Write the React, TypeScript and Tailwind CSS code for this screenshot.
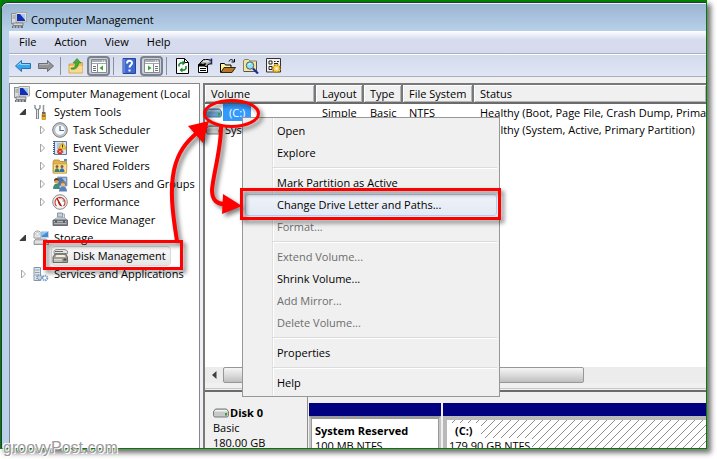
import type { ReactNode } from 'react';
import clsx from 'clsx';

/* ---------- icons ---------- */

interface IconProps {
  children: ReactNode;
}

function Icon({ children }: IconProps) {
  return (
    <svg width="16" height="16" viewBox="0 0 16 16" className="shrink-0" aria-hidden="true">
      {children}
    </svg>
  );
}

const ComputerIcon = () => (
  <Icon>
    <rect x="0.5" y="1.5" width="5" height="10" fill="#d8dade" stroke="#8b8f96" />
    <path d="M1.5 4h3M1.5 6h3" stroke="#8b8f96" />
    <path d="M5 0.5h10.5v9.5H5z" fill="#e6e3da" stroke="#a9a9a4" />
    <path d="M6 2h8v7H6z" fill="#1230b4" />
    <path d="M9 2h5v6z" fill="#a9c8f4" />
    <path d="M2 11h10v2.500H2z" fill="#d5d7da" stroke="#6b6f74" strokeWidth="0.800" />
    <path d="M1 14h11v2H1z" fill="#6b6f74" />
    <path d="M2 14.500h2v1H2zM5 14.500h2v1H5zM8 14.500h2v1H8z" fill="#dfe2e6" />
  </Icon>
);

const ToolsIcon = () => (
  <Icon>
    <path d="M2 1v3l2 2h1l2-2V1" fill="none" stroke="#7f858b" strokeWidth="1.300" />
    <path d="M4.500 6v9" stroke="#7f858b" strokeWidth="3" />
    <path d="M4.500 6v8.500" stroke="#e4e7ea" strokeWidth="1" />
    <path d="M10.500 1v7" stroke="#8f969c" strokeWidth="1.500" />
    <path d="M9 8h3.500v2H9z" fill="#5d6368" />
    <path d="M9 10h3.500v5.500H9z" fill="#f0b21c" stroke="#b57f0e" strokeWidth="0.600" />
    <path d="M9 12h3.500" stroke="#4a4a4a" />
  </Icon>
);

const ClockIcon = () => (
  <Icon>
    <circle cx="8" cy="8" r="7.300" fill="#c3c6c9" stroke="#7b7f83" />
    <circle cx="8" cy="8" r="5.300" fill="#f7fbff" stroke="#a7adb3" strokeWidth="0.700" />
    <path d="M8 4v4.500H12" fill="none" stroke="#4f6f93" strokeWidth="1.200" />
  </Icon>
);

const EventIcon = () => (
  <Icon>
    <path d="M2.500 1.500h12v13h-12z" fill="#d9e6f6" stroke="#68799a" />
    <path d="M2 1v14" stroke="#445d8b" strokeWidth="2" strokeDasharray="1 1" />
    <path d="M5 4h4M5 6h3M5 8h3M5 12h7" stroke="#8aa2c4" />
    <path d="M10.500 2.500l4 6.500h-8z" fill="#ffd52e" stroke="#c58a00" strokeWidth="0.700" />
    <path d="M10.500 4.500v3" stroke="#3c2f00" />
    <circle cx="8" cy="11.500" r="2.700" fill="#cf2a1b" />
    <path d="M7 10.500l2 2M9 10.500l-2 2" stroke="#fff" strokeWidth="0.800" />
  </Icon>
);

const SharedIcon = () => (
  <Icon>
    <path d="M1 4l1-2h5l1 1.500h6.500V15H1z" fill="#e3b24e" stroke="#b98725" strokeWidth="0.800" />
    <path d="M1.500 6H15l-.5 9h-13z" fill="#fbdf8f" stroke="#c7983a" strokeWidth="0.700" />
    <circle cx="5" cy="8.500" r="1.500" fill="#80613d" />
    <circle cx="10" cy="8.500" r="1.500" fill="#80613d" />
    <path d="M2.500 14c0-5 5-5 5 0z" fill="#3f7d68" />
    <path d="M7.500 14c0-5 5-5 5 0z" fill="#316fae" />
    <path d="M12 1h3v2h-3z" fill="#4c89d6" />
  </Icon>
);

const UsersIcon = () => (
  <Icon>
    <path d="M5.500 1h9.500v9H5.500z" fill="#4576b8" stroke="#a7adb6" />
    <path d="M10 2h4v5z" fill="#9cc6f0" />
    <circle cx="4.500" cy="5" r="2.500" fill="#d8a15c" />
    <path d="M2 5c0-4 5-4 5 0L5 4z" fill="#5d4020" />
    <path d="M1 13c0-7 7-7 7 0z" fill="#3d8f78" />
    <circle cx="11" cy="8" r="2.300" fill="#e5bd82" />
    <path d="M8.800 8c0-4 4.500-4 4.500 0L11 7z" fill="#a8762e" />
    <path d="M7 15.500c0-7 8-7 8 0z" fill="#5c82b8" />
  </Icon>
);

const GaugeIcon = () => (
  <Icon>
    <circle cx="8" cy="8" r="7.300" fill="#f1f1f1" stroke="#8a8a8a" />
    <path d="M4.500 12a5 5 0 1 1 7 0" fill="#fff" stroke="#d5402f" strokeWidth="1.200" />
    <path d="M5 4l4.500 8-2-1z" fill="#b01f17" stroke="#b01f17" strokeWidth="1" />
    <path d="M8 3.500v1.500M12 7h-1.500M11 4.500l-1 1" stroke="#6d6d6d" />
  </Icon>
);

const DeviceIcon = () => (
  <Icon>
    <path d="M5.500 1h5v4h-5z" fill="#b8d2e6" stroke="#8c969e" />
    <path d="M10.500 2h2v5h-2z" fill="#dfe3e6" stroke="#8c969e" strokeWidth="0.700" />
    <path d="M2 8l2-2h9l2 2z" fill="#e9ebec" stroke="#858b90" strokeWidth="0.700" />
    <path d="M1 8h14.500v5.500H1z" fill="#7d8388" stroke="#53585d" strokeWidth="0.800" />
    <path d="M2 9.500h12.500M2 11.500h12.500" stroke="#aeb4b9" />
    <path d="M4 8.500v2M12 8.500v2" stroke="#3f4347" strokeWidth="1.500" />
  </Icon>
);

const StorageIcon = () => (
  <Icon>
    <path d="M1 4c0-4 7-4 7 0v4H1z" fill="#ececec" stroke="#9a9a9a" />
    <ellipse cx="4.500" cy="4" rx="2" ry="1.300" fill="#fff" stroke="#aaa" strokeWidth="0.600" />
    <path d="M8 1.500h7.500v6H8z" fill="#3f8ed4" stroke="#cfd5da" />
    <path d="M8.500 2h6l-6 4z" fill="#8dc8f4" />
    <path d="M1 11l2-2h10l2.500 2v3.500H1z" fill="#c9ccce" stroke="#83888c" strokeWidth="0.800" />
    <path d="M2 12h8" stroke="#f5f5f5" />
    <path d="M12 12h2" stroke="#53b43c" strokeWidth="1.500" />
  </Icon>
);

const DiskMgmtIcon = () => (
  <Icon>
    <path d="M2 5.500V3l2-1.500h9L15.500 3v2.500z" fill="#e3e4e5" stroke="#7e7e7e" strokeWidth="0.800" />
    <path d="M3 3.500h8" stroke="#6d6d6d" />
    <path d="M1 9l2-3h11l1.500 3v5.500H1z" fill="#a19e98" stroke="#565350" strokeWidth="0.800" />
    <path d="M4.500 7h8l1 2h-10z" fill="#f6eedb" />
    <path d="M2 11.500h8M2 13h8" stroke="#dedad2" />
    <path d="M11.500 10.500h3v2h-3z" fill="#4f4c49" />
  </Icon>
);

const ServicesIcon = () => (
  <Icon>
    <path d="M1 1.500h6.500v13H1z" fill="#dfe6ee" stroke="#8796a6" />
    <path d="M2 4h4.500M2 6.500h4.500M2 9h3" stroke="#8fa0b2" />
    <circle cx="6.500" cy="11.500" r="2.500" fill="#c3d5e6" stroke="#7e95ad" strokeWidth="1.800" strokeDasharray="1.300 0.700" />
    <circle cx="12" cy="12" r="2.300" fill="#fff" stroke="#7aa4cc" strokeWidth="2" strokeDasharray="1.300 0.600" />
  </Icon>
);

interface DriveIconProps {
  selected?: boolean;
}

function DriveIcon({ selected }: DriveIconProps) {
  return (
    <svg width="16" height="10" viewBox="0 0 16 10" className="shrink-0" aria-hidden="true">
      <path
        d="M0.500 3.500L2.500 1h11l2 2.500v4l-1 1.500h-13l-1-1.500z"
        fill={selected ? '#6a9fcb' : '#c6c8c9'}
        stroke={selected ? '#47779f' : '#77797b'}
      />
      <path d="M2.500 2h11l1 1.500H1.500z" fill={selected ? '#a9cdea' : '#f4f4f4'} />
      <path d="M12 5h2v2.500h-2z" fill="#37a32b" />
    </svg>
  );
}

const BackIcon = () => (
  <Icon>
    <path d="M0.500 8L6.500 2.500v3h9v5h-9v3z" fill="#37a7ec" stroke="#2a6fb5" />
    <path d="M2.500 7.500l3-3v2h9" fill="none" stroke="#92d8fb" />
  </Icon>
);

const ForwardIcon = () => (
  <Icon>
    <path d="M15.500 8L9.500 2.500v3h-9v5h9v3z" fill="#929497" stroke="#6a6d71" />
    <path d="M1.500 6.500h9v-2" fill="none" stroke="#b6b8ba" />
  </Icon>
);

const FolderUpIcon = () => (
  <Icon>
    <path d="M1 6h5l1-1.500h7.500V15H1z" fill="#eebf5e" stroke="#cf9a3b" strokeWidth="0.800" />
    <path d="M1.500 8h13v6.500h-13z" fill="#f9da8c" />
    <path d="M3 10c4 0 4.500-2 4.500-5H5l4-4.500 4 4.500h-2.500c0 5-3.500 7-7.500 6z" fill="#43ac31" stroke="#2b8421" strokeWidth="0.600" />
  </Icon>
);

interface PaneIconProps {
  flip?: boolean;
}

// flip puts the narrow pane on the right hand side
function PaneIcon({ flip }: PaneIconProps) {
  return (
    <Icon>
      <path d="M0.500 1.500h15v13H0.500z" fill="#fdfdfd" stroke="#858990" />
      <path d="M1 2h14v2H1z" fill="#a9adb5" />
      <path d="M11 3h1M13 3h1" stroke="#fff" />
      <path d="M1 5.500h14" stroke="#a0a4ab" />
      <path d={flip ? 'M9.500 6v8' : 'M6.500 6v8'} stroke="#858990" />
      <path
        d={flip ? 'M11 8.500h3M11 10.500h3M11 12.500h3' : 'M2 8.500h3M2 10.500h3M2 12.500h3'}
        stroke="#6b7179"
      />
      <path d={flip ? 'M4 7.500l3.500 2.500L4 12.500z' : 'M12 7.500L8.500 10l3.500 2.500z'} fill="#35a82a" />
    </Icon>
  );
}

const HelpIcon = () => (
  <Icon>
    <path d="M2 .5h12.500v15H2z" fill="#3c68cf" stroke="#26459d" />
    <path d="M3 1v14" stroke="#8aa9ee" />
    <path d="M6 5.500C6 2 11 2 11 5c0 2-2.500 2-2.500 4.500" fill="none" stroke="#fff" strokeWidth="2" />
    <path d="M7.500 11.500h2v2h-2z" fill="#fff" />
  </Icon>
);

const RefreshIcon = () => (
  <Icon>
    <path d="M2.500 .5h8l4 4v11h-12z" fill="#fff" stroke="#000" />
    <path d="M10.500 .5v4h4" fill="none" stroke="#000" />
    <path d="M5 8.500V6.500L6.500 5H9" fill="none" stroke="#12852a" strokeWidth="1.500" />
    <path d="M8.500 2.500l3 2.500-3 2.500z" fill="#12852a" />
    <path d="M12 8v2.500L10.500 12H8" fill="none" stroke="#12852a" strokeWidth="1.500" />
    <path d="M8.500 9.500l-3 2.500 3 2.500z" fill="#12852a" />
  </Icon>
);

const PropertiesIcon = () => (
  <Icon>
    <path d="M1.500 6.500h9v8h-9z" fill="#fff" stroke="#000" />
    <path d="M1 7.500h10" stroke="#000" strokeWidth="2" />
    <path d="M3 10.500h6M3 12.500h6" stroke="#000" />
    <path d="M2.500 5.500l4-4h5l3 1v3l-3.500 1-1.500 2.500-2-1 1-2.500-2.500 1z" fill="#a9a9a5" stroke="#000" />
    <path d="M6 3.500l5 .5M8 2l4 1.500" stroke="#fff" strokeWidth="0.800" />
    <path d="M14.500 .5v6" stroke="#20207a" strokeWidth="1.500" />
  </Icon>
);

const OpenIcon = () => (
  <Icon>
    <path d="M.5 14.500v-9h4l1 1.500h5.500v3" fill="#fff6a0" stroke="#000" />
    <path d="M.8 14.500L4 9.500h11.500l-3.500 5z" fill="#b5752a" stroke="#3b2306" />
    <path d="M9 3.500c1-2.500 3-2.500 5 0M14.500 1v3H11.500" fill="none" stroke="#000" />
  </Icon>
);

const SearchIcon = () => (
  <Icon>
    <path d="M.5 13.500V3l1-1.500h4L7 3h6.500v10.500z" fill="#f3e6a4" stroke="#8d8352" />
    <path d="M13.500 3.500v10H1" fill="none" stroke="#555" />
    <circle cx="7" cy="7.500" r="3.700" fill="#8be4f4" stroke="#4d5a62" />
    <path d="M5.500 7l2-2" stroke="#fff" />
    <path d="M10 10.500l5 5" stroke="#1c2a9e" strokeWidth="2.200" />
  </Icon>
);

const SettingsIcon = () => (
  <Icon>
    <path d="M.5 .5h14v13.500H.5z" fill="#f3f1ea" stroke="#333" />
    <path d="M3 3h3v3H3zM3 8.500h3v3H3z" fill="#fff" stroke="#222" />
    <path d="M8 3.500h1.500M11 3.500h2M8 5.500h4" stroke="#222" />
    <circle cx="10.500" cy="10.500" r="3.500" fill="#f6c52c" stroke="#b07a08" strokeWidth="2.200" strokeDasharray="1.600 1.100" />
    <circle cx="10.500" cy="10.500" r="2.900" fill="#f9d44a" />
    <circle cx="10.500" cy="10.500" r="1.200" fill="#fff" />
  </Icon>
);

/* ---------- title, menu and tool bars ---------- */

const menus = ['File', 'Action', 'View', 'Help'];

interface ToolButtonProps {
  label: string;
  pressed?: boolean;
  children: ReactNode;
}

function ToolButton({ label, pressed, children }: ToolButtonProps) {
  return (
    <button
      type="button"
      aria-label={label}
      className={clsx(
        'flex h-5 w-[23px] items-center justify-center rounded-[4px]',
        pressed && 'border-2 border-[#7b818f] bg-[#cbd1dc]'
      )}
    >
      {children}
    </button>
  );
}

function ToolSeparator() {
  return <div className="mx-[3px] h-[18px] w-px bg-[#8b909b]" />;
}

function TopBars() {
  return (
    <header>
      <div className="flex h-7 items-center gap-1 rounded-tl-[6px] border-t border-[#eaf3fb] bg-gradient-to-b from-[#9ab5d1] to-[#b8d0e9] pt-1 pl-[9px]">
        <ComputerIcon />
        <h1>Computer Management</h1>
      </div>
      <div className="ml-[7px]">
        <nav className="flex h-[23px] items-center border-b border-[#a9b0bd] bg-gradient-to-b from-white via-[#d6dcee] via-40% to-[#d5dbed] pl-0.5">
          {menus.map((name) => (
            <button key={name} type="button" className="pr-[10px] pl-2">
              {name}
            </button>
          ))}
        </nav>
        <div className="flex h-[23px] items-center border-t border-b border-t-white border-b-[#a9b0bd] bg-gradient-to-b from-[#d3daed] to-[#e0e6f4] pl-0.5">
          <ToolButton label="Back"><BackIcon /></ToolButton>
          <ToolButton label="Forward"><ForwardIcon /></ToolButton>
          <ToolSeparator />
          <ToolButton label="Up one level"><FolderUpIcon /></ToolButton>
          <ToolButton label="Show console tree" pressed><PaneIcon /></ToolButton>
          <ToolSeparator />
          <ToolButton label="Help"><HelpIcon /></ToolButton>
          <ToolButton label="Show action pane" pressed><PaneIcon flip /></ToolButton>
          <ToolSeparator />
          <ToolButton label="Refresh"><RefreshIcon /></ToolButton>
          <ToolButton label="Properties"><PropertiesIcon /></ToolButton>
          <ToolButton label="Open"><OpenIcon /></ToolButton>
          <ToolButton label="Find"><SearchIcon /></ToolButton>
          <ToolButton label="Settings"><SettingsIcon /></ToolButton>
        </div>
      </div>
    </header>
  );
}

/* ---------- console tree ---------- */

interface TreeNode {
  name: string;
  level: 0 | 1 | 2;
  icon: ReactNode;
  state?: 'open' | 'closed';
  selected?: boolean;
}

const tree: TreeNode[] = [
  { name: 'Computer Management (Local', level: 0, icon: <ComputerIcon /> },
  { name: 'System Tools', level: 1, icon: <ToolsIcon />, state: 'open' },
  { name: 'Task Scheduler', level: 2, icon: <ClockIcon />, state: 'closed' },
  { name: 'Event Viewer', level: 2, icon: <EventIcon />, state: 'closed' },
  { name: 'Shared Folders', level: 2, icon: <SharedIcon />, state: 'closed' },
  { name: 'Local Users and Groups', level: 2, icon: <UsersIcon />, state: 'closed' },
  { name: 'Performance', level: 2, icon: <GaugeIcon />, state: 'closed' },
  { name: 'Device Manager', level: 2, icon: <DeviceIcon /> },
  { name: 'Storage', level: 1, icon: <StorageIcon />, state: 'open' },
  { name: 'Disk Management', level: 2, icon: <DiskMgmtIcon />, selected: true },
  { name: 'Services and Applications', level: 1, icon: <ServicesIcon />, state: 'closed' },
];

const indent = { 0: 'pl-1', 1: 'pl-[9px]', 2: 'pl-[28px]' };

function Expander({ state }: { state?: 'open' | 'closed' }) {
  return (
    <svg width="14" height="10" viewBox="0 0 14 10" className="shrink-0" aria-hidden="true">
      {state === 'open' && <path d="M6.500 2v5.500H1z" fill="#3b3b3b" stroke="#222" strokeWidth="0.800" />}
      {state === 'closed' && <path d="M2.500 1v8l4-4z" fill="#fff" stroke="#a3a3a3" />}
    </svg>
  );
}

function ConsoleTree() {
  return (
    <ul className="w-[191px] shrink-0 overflow-hidden border border-b-0 border-[#828790] bg-white pt-px">
      {tree.map((node) => (
        <li key={node.name} className={clsx('flex h-[18px] items-center', indent[node.level])}>
          {node.level > 0 && <Expander state={node.state} />}
          <button
            type="button"
            className={clsx(
              'flex h-[18px] items-center gap-[5px] rounded-[3px] pr-1 whitespace-nowrap',
              node.selected && 'bg-gradient-to-b from-[#fafafa] to-[#e6e6e6] outline outline-[#d9d9d9]'
            )}
          >
            {node.icon}
            {node.name}
          </button>
        </li>
      ))}
    </ul>
  );
}

/* ---------- volume list ---------- */

const volumes = [
  { name: '(C:)', layout: 'Simple', type: 'Basic', fs: 'NTFS', status: 'Healthy (Boot, Page File, Crash Dump, Primary Partition)', selected: true },
  { name: 'System Reserved', layout: 'Simple', type: 'Basic', fs: 'NTFS', status: 'Healthy (System, Active, Primary Partition)' },
];

const headCell = 'border-r-2 border-b-2 border-r-[#77797d] border-b-[#6b6b6b] pl-1.5 text-left font-normal shadow-[inset_1px_1px_0_#fff,inset_-1px_-1px_0_#b5b5b5] last:border-r-0';

function VolumeList() {
  return (
    <table className="w-full table-fixed border-separate border-spacing-0 whitespace-nowrap">
      <colgroup>
        <col className="w-[111px]" />
        <col className="w-[48px]" />
        <col className="w-[39px]" />
        <col className="w-[71px]" />
        <col />
      </colgroup>
      <thead>
        <tr className="h-[19px] bg-[#f0f0f0] leading-[17px]">
          <th className={headCell}>Volume</th>
          <th className={headCell}>Layout</th>
          <th className={headCell}>Type</th>
          <th className={headCell}>File System</th>
          <th className={headCell}>Status</th>
        </tr>
      </thead>
      <tbody>
        {volumes.map((vol) => (
          <tr key={vol.name} className="h-[17px] leading-[17px]">
            <td className="overflow-hidden">
              <span className="flex items-center gap-px pl-px">
                <DriveIcon selected={vol.selected} />
                <span className={clsx(vol.selected ? 'bg-[#3399ff] px-[6px] text-white' : 'pl-0.5')}>{vol.name}</span>
              </span>
            </td>
            <td className="pl-1.5">{vol.layout}</td>
            <td className="pl-1.5">{vol.type}</td>
            <td className="pl-1.5">{vol.fs}</td>
            <td className="overflow-hidden pl-1.5">{vol.status}</td>
          </tr>
        ))}
      </tbody>
    </table>
  );
}

function HorizontalScroll() {
  return (
    <div className="flex h-4 shrink-0 items-stretch bg-[#ececec]">
      <button type="button" aria-label="Scroll left" className="flex w-[18px] items-center justify-center">
        <svg width="5" height="8" viewBox="0 0 5 8" aria-hidden="true">
          <path d="M4.500 0v8L0 4z" fill="#404040" />
        </svg>
      </button>
      <div className="w-[72%] rounded-[2px] border border-[#979797] bg-gradient-to-b from-[#f5f5f5] via-[#dcdcdc] to-[#bfbfbf]" />
    </div>
  );
}

/* ---------- disk map ---------- */

function Hatch() {
  return (
    <svg className="absolute inset-0 h-full w-full" aria-hidden="true">
      <pattern id="hatch" width="8" height="8" patternUnits="userSpaceOnUse">
        <path d="M0 8L8 0M-1 1L1 -1M7 9L9 7" stroke="#8d8d8d" />
      </pattern>
      <rect width="100%" height="100%" fill="url(#hatch)" />
    </svg>
  );
}

function DiskMap() {
  return (
    <section className="flex h-[58px] shrink-0 overflow-hidden border-t-2 border-[#6b6b6b] bg-[#f0f0f0] leading-[15px]">
      <div className="w-[103px] shrink-0 border-r border-[#8f8f8f] pt-[13px] pl-2">
        <p className="flex items-center gap-px font-bold">
          <DriveIcon />
          Disk 0
        </p>
        <p>Basic</p>
        <p>180.00 GB</p>
      </div>
      <div className="flex w-[133px] shrink-0 flex-col pt-[11px] pl-px">
        <div className="h-[13px] shrink-0 bg-[#000080]" />
        <div className="flex-1 border-x-2 border-t-2 border-[#c4c4c4] border-t-[#9a9a9a]">
          <div className="h-full border border-b-0 border-[#9a9a9a] bg-white pt-1 pl-[3px] whitespace-nowrap">
            <p className="font-bold">System Reserved</p>
            <p>100 MB NTFS</p>
          </div>
        </div>
      </div>
      <div className="ml-0.5 flex min-w-0 flex-1 flex-col pt-[11px]">
        <div className="h-[13px] shrink-0 bg-[#000080]" />
        <div className="flex-1 border-t-4 border-l-4 border-[#b9b9b9]">
          <div className="relative h-full bg-white pt-[3px] whitespace-nowrap">
            <Hatch />
            <p className="relative w-fit bg-white px-2 font-bold">(C:)</p>
            <p className="relative w-fit bg-white px-0.5">179.90 GB NTFS</p>
          </div>
        </div>
      </div>
    </section>
  );
}

/* ---------- context menu ---------- */

interface MenuEntry {
  label: string;
  disabled?: boolean;
  hot?: boolean;
}

const menuGroups: MenuEntry[][] = [
  [{ label: 'Open' }, { label: 'Explore' }],
  [
    { label: 'Mark Partition as Active' },
    { label: 'Change Drive Letter and Paths...', hot: true },
    { label: 'Format...', disabled: true },
  ],
  [
    { label: 'Extend Volume...', disabled: true },
    { label: 'Shrink Volume...' },
    { label: 'Add Mirror...', disabled: true },
    { label: 'Delete Volume...', disabled: true },
  ],
  [{ label: 'Properties' }],
  [{ label: 'Help' }],
];

function ContextMenu() {
  return (
    <div
      role="menu"
      className="absolute top-[117px] left-[242px] w-[258px] border border-[#979797] bg-[#f0f0f0] bg-[linear-gradient(to_right,transparent_29px,#e0e0e0_29px,#e0e0e0_30px,#fff_30px,#fff_31px,transparent_31px)] px-0.5 py-0.5"
    >
      {menuGroups.map((group, i) => (
        <div key={group[0].label}>
          {i > 0 && (
            <div className="ml-[28px] flex h-2 items-center">
              <div className="h-0.5 w-full border-t border-b border-t-[#dcdcdc] border-b-white" />
            </div>
          )}
          {group.map((item) => (
            <button
              key={item.label}
              type="button"
              role="menuitem"
              disabled={item.disabled}
              className={clsx(
                'flex h-[22px] w-full items-center rounded-[3px] border pl-[31px]',
                item.hot ? 'border-[#aecff7] bg-gradient-to-b from-[#f0f3f8] to-[#e2eaf5]' : 'border-transparent',
                item.disabled && 'text-[#6d6d6d]'
              )}
            >
              {item.label}
            </button>
          ))}
        </div>
      ))}
    </div>
  );
}

/* ---------- red marker strokes ---------- */

function Markers() {
  return (
    <svg
      width="520"
      height="290"
      viewBox="0 0 520 290"
      className="pointer-events-none absolute top-0 left-0 drop-shadow-[3px_3px_2px_rgba(0,0,0,0.5)]"
      aria-hidden="true"
    >
      <g fill="none" stroke="#fe0000">
        <rect x="44.500" y="241.500" width="137" height="27" strokeWidth="3" />
        <rect x="241.500" y="189.500" width="258" height="29" strokeWidth="3" />
        <ellipse cx="231.500" cy="113.500" rx="27" ry="13" strokeWidth="3" />
        <path d="M177 241C172 210 170 190 174 170C178 152 186 142 198 132" strokeWidth="4" />
        <path d="M221 127C221 150 213 175 212 190Q212 205 226 204" strokeWidth="4" />
      </g>
      <path d="M209 121L188 126L203 143z" fill="#fe0000" />
      <path d="M242 206L223 194L222 214z" fill="#fe0000" />
    </svg>
  );
}

export default function App() {
  return (
    <div className="relative flex h-screen overflow-hidden bg-white pr-2.5 pb-2.5 font-['Open_Sans','Noto_Sans',sans-serif] text-[11px] leading-4 text-black">
      <main className="flex min-w-0 flex-1 overflow-hidden border border-t-2 border-[#008000] bg-[#008000] shadow-[4px_4px_5px_rgba(0,0,0,0.55)]">
        <div className="flex min-w-0 flex-1 flex-col rounded-tl-[7px] border-t border-l border-[#2c3440] bg-[#b9d1ea]">
          <TopBars />
          <div className="ml-[7px] flex min-h-0 flex-1 gap-[3px] bg-[#f0f0f0] pt-[6px]">
            <ConsoleTree />
            <div className="flex min-w-0 flex-1 flex-col border-t-2 border-l-2 border-[#77797d] bg-white">
              <div className="min-h-0 flex-1 overflow-hidden">
                <VolumeList />
              </div>
              <HorizontalScroll />
              <div className="flex h-[7px] shrink-0 flex-col justify-end bg-[#f0f0f0] pb-px">
                <div className="h-px bg-[#c8c8c8]" />
              </div>
              <DiskMap />
            </div>
          </div>
        </div>
      </main>
      <ContextMenu />
      <Markers />
      <p className="absolute bottom-0 left-[3px] font-['Liberation_Sans',sans-serif] text-[16px] leading-[22px] text-[#9b9b9b] [text-shadow:1px_1px_0_#fff,-1px_-1px_0_#fff]">
        groovyPost.com
      </p>
    </div>
  );
}
